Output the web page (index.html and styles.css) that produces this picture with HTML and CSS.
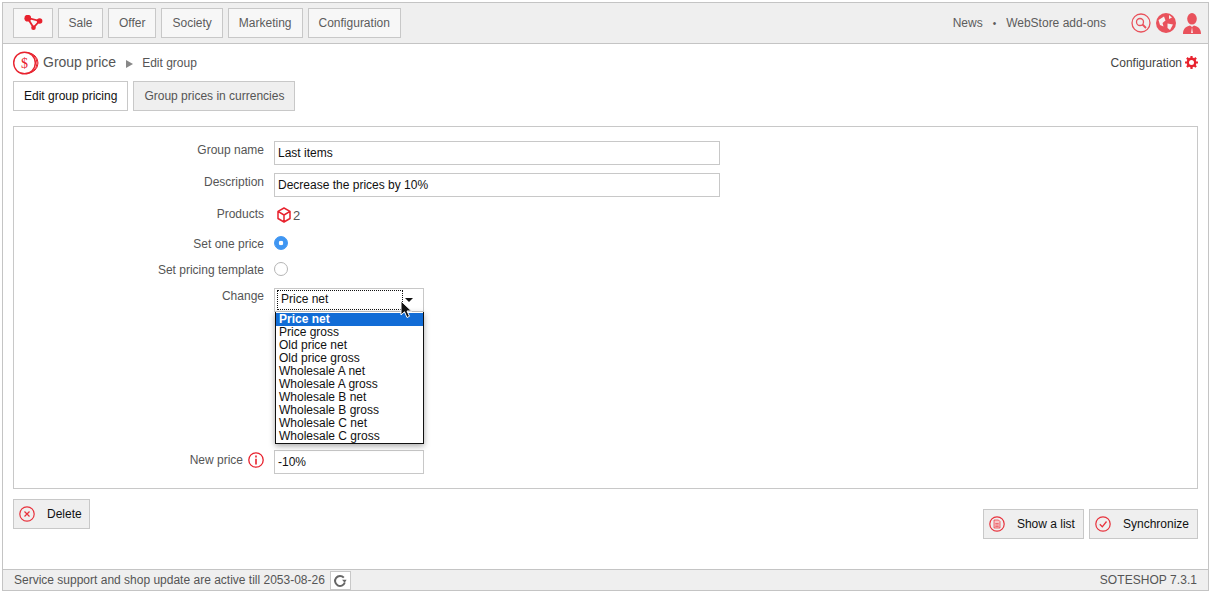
FILE: index.html
```html
<!DOCTYPE html>
<html lang="en">
<head>
<meta charset="utf-8">
<title>Group price</title>
<link rel="stylesheet" href="styles.css">
</head>
<body>
<div class="frame">
  <header class="topbar">
    <nav class="menu">
      <a class="btn logo"><svg width="20" height="16" viewBox="0 0 20 16"><path d="M3.500 3 L9.500 12.500 L15.500 6 Z" fill="none" stroke="#e8222e" stroke-width="1.800"/><circle cx="3.800" cy="3.200" r="3.400" fill="#e8222e"/><circle cx="15.600" cy="6" r="2.800" fill="#e8222e"/><circle cx="9.500" cy="12.700" r="2.300" fill="#e8222e"/></svg></a>
      <a class="btn b-sale">Sale</a>
      <a class="btn">Offer</a>
      <a class="btn">Society</a>
      <a class="btn">Marketing</a>
      <a class="btn">Configuration</a>
    </nav>
    <div class="top-right">
      <span>News</span><span class="dot">•</span><span>WebStore add-ons</span>
      <span class="top-icons">
        <svg width="20" height="20" viewBox="0 0 20 20"><circle cx="10" cy="10" r="9" fill="none" stroke="#e9525c" stroke-width="1.300"/><circle cx="9" cy="9" r="3.500" fill="none" stroke="#e9525c" stroke-width="1.300"/><path d="M11.500 11.500 L15 15" stroke="#e9525c" stroke-width="1.800"/></svg>
        <svg width="20" height="20" viewBox="0 0 20 20"><circle cx="10" cy="10" r="10" fill="#e9525c"/><path d="M2.500 7 L8 3.500 L9.500 7.500 L6.500 10 L7.500 13.500 L4 12 Z M11.500 10.500 L17 11.500 L14 17 L11.500 15 Z M13 2 L16 4.500 L13 6 Z" fill="#f6f0f0"/></svg>
        <svg class="person" width="20" height="21" viewBox="0 0 20 21"><ellipse cx="10" cy="5.800" rx="4.800" ry="5.800" fill="#e9525c"/><path d="M1 21 C1 15.500 4 13.500 8 12.500 L10 14 L12 12.500 C16 13.500 19 15.500 19 21 Z" fill="#e9525c"/><path d="M10 14 L9.200 20 L10.800 20 Z" fill="#fff"/></svg>
      </span>
    </div>
  </header>

  <main class="content">
    <div class="crumbs">
      <div class="crumb-left">
        <svg class="crumb-icon" width="26" height="24" viewBox="0 0 26 24"><circle cx="15" cy="12" r="10" fill="none" stroke="#e8222e" stroke-width="1"/><circle cx="13.500" cy="12" r="10.500" fill="none" stroke="#e8222e" stroke-width="1"/><circle cx="11.500" cy="12" r="10.800" fill="#fff" stroke="#e8222e" stroke-width="1.400"/><text x="11.500" y="17" text-anchor="middle" class="dollar">$</text></svg>
        <span class="crumb-title">Group price</span>
        <span class="crumb-arrow"></span>
        <span class="crumb-sub">Edit group</span>
      </div>
      <div class="crumb-right">Configuration
        <svg width="13" height="13" viewBox="0 0 13 13"><circle cx="6.500" cy="6.500" r="3.700" fill="none" stroke="#e8222e" stroke-width="2.400"/><path d="M6.500 0 V13 M0 6.500 H13 M1.900 1.900 L11.100 11.100 M11.100 1.900 L1.900 11.100" stroke="#e8222e" stroke-width="2.200" stroke-dasharray="2.400 8.200 2.400"/></svg>
      </div>
    </div>

    <div class="tabs">
      <a class="tab active">Edit group pricing</a>
      <a class="tab">Group prices in currencies</a>
    </div>

    <form class="panel">
      <div class="row r-name"><label>Group name</label><div class="input wide">Last items</div></div>
      <div class="row r-desc"><label>Description</label><div class="input wide">Decrease the prices by 10%</div></div>
      <div class="row r-prod"><label>Products</label>
        <div class="products"><svg width="14" height="16" viewBox="0 0 14 16"><path d="M7 1 L13 4.300 V11.500 L7 15 L1 11.500 V4.300 Z M1 4.300 L7 8 L13 4.300 M7 8 V15" fill="none" stroke="#e8222e" stroke-width="1.500" stroke-linejoin="round"/></svg><span>2</span></div>
      </div>
      <div class="row r-one"><label>Set one price</label><span class="radio on"></span></div>
      <div class="row r-tpl"><label>Set pricing template</label><span class="radio"></span></div>
      <div class="row r-change"><label>Change</label>
        <div class="select">
          <span class="select-focus">Price net</span><span class="caret"></span>
          <svg class="cursor" width="13" height="19" viewBox="0 0 13 19"><path d="M1 1 V15 L4.500 11.800 L7 17.500 L9.500 16.300 L7 11 L11.500 11 Z" fill="#111" stroke="#fff" stroke-width="1"/></svg>
          <ul class="dropdown">
            <li class="sel">Price net</li>
            <li>Price gross</li>
            <li>Old price net</li>
            <li>Old price gross</li>
            <li>Wholesale A net</li>
            <li>Wholesale A gross</li>
            <li>Wholesale B net</li>
            <li>Wholesale B gross</li>
            <li>Wholesale C net</li>
            <li>Wholesale C gross</li>
          </ul>
        </div>
      </div>
      <div class="row r-new"><label>New price <svg class="info" width="16" height="16" viewBox="0 0 16 16"><circle cx="8" cy="8" r="7.200" fill="none" stroke="#e8222e" stroke-width="1.300"/><path d="M8 3.600 V5.400 M8 6.800 V12.400" stroke="#e8222e" stroke-width="1.600"/></svg></label><div class="input narrow">-10%</div></div>
    </form>

    <div class="actions">
      <a class="act act-del"><svg width="16" height="16" viewBox="0 0 16 16"><circle cx="8" cy="8" r="7.200" fill="none" stroke="#e8323c" stroke-width="1.200"/><path d="M5.500 5.500 L10.500 10.500 M10.500 5.500 L5.500 10.500" stroke="#e8323c" stroke-width="1.200"/></svg><span>Delete</span></a>
      <div class="actions-right">
        <a class="act"><svg width="16" height="16" viewBox="0 0 16 16"><circle cx="8" cy="8" r="7.200" fill="none" stroke="#e8323c" stroke-width="1.200"/><path d="M5 4 H9.500 L11 5.500 V12 H5 Z" fill="#f7c4c6" stroke="#e8323c" stroke-width=".7"/><path d="M6.300 7.500 H9.700 M6.300 9 H9.700 M6.300 10.500 H9.700" stroke="#e8323c" stroke-width=".6"/></svg><span>Show a list</span></a>
        <a class="act"><svg width="16" height="16" viewBox="0 0 16 16"><circle cx="8" cy="8" r="7.200" fill="none" stroke="#e8323c" stroke-width="1.200"/><path d="M4.800 8.300 L7.300 10.800 L11.500 5.500" fill="none" stroke="#e8323c" stroke-width="1.300"/></svg><span>Synchronize</span></a>
      </div>
    </div>
  </main>

  <footer class="status">
    <div class="status-left"><span>Service support and shop update are active till 2053-08-26</span>
      <span class="refresh"><svg width="14" height="14" viewBox="0 0 14 14"><path d="M11.800 8.500 A5 5 0 1 1 10.800 3.600" fill="none" stroke="#666" stroke-width="2"/><path d="M9 5.800 H13.600 L11.700 8.800 Z" fill="#666"/></svg></span>
    </div>
    <span class="version">SOTESHOP 7.3.1</span>
  </footer>
</div>
</body>
</html>
```

FILE: styles.css
```css
* { box-sizing: border-box; }
html, body { margin: 0; padding: 0; background: #fff; }
body {
  font-family: "Liberation Sans", Arial, sans-serif;
  font-size: 12px;
  color: #555;
  padding: 2px 1px 2px 2px;
}
svg { display: block; flex: none; }
ul { list-style: none; margin: 0; padding: 0; }

.frame {
  height: 589px;
  border: 1px solid #c4c4c4;
  display: flex;
  flex-direction: column;
}

/* top bar */
.topbar {
  height: 41px;
  flex: none;
  background: #efefef;
  border-bottom: 1px solid #c4c4c4;
  padding: 5px 6px 0 10px;
  display: flex;
  justify-content: space-between;
}
.menu { display: flex; gap: 5px; }
.btn {
  height: 30px;
  padding: 0 10px;
  background: #f7f7f7;
  border: 1px solid #c8c8c8;
  display: flex;
  align-items: center;
  color: #5c5c5c;
}
.b-sale { width: 45px; padding: 0; justify-content: center; }
.logo { width: 40px; padding: 0 0 0 10px; }
.top-right { display: flex; align-items: center; height: 30px; color: #5c5c5c; }
.dot { margin: 0 10px; font-size: 10px; }
.top-icons { display: flex; align-items: center; gap: 5px; margin-left: 25px; }
.person { margin-left: 1px; margin-top: 0; }

/* content */
.content { flex: 1; padding: 0 10px; display: flex; flex-direction: column; }
.crumbs {
  height: 37px;
  display: flex;
  justify-content: space-between;
  align-items: center;
}
.crumb-left { display: flex; align-items: center; }
.crumb-icon { margin-right: 4px; }
.crumb-title { font-size: 14px; color: #555; margin-top: -2px; }
.crumb-arrow {
  width: 0; height: 0;
  margin: 2px 9px 0 10px;
  border-left: 7px solid #888;
  border-top: 4px solid transparent;
  border-bottom: 4px solid transparent;
}
.crumb-right { display: flex; align-items: center; gap: 3px; color: #444; padding-left: 1px; }

.tabs { display: flex; gap: 5px; }
.tab {
  height: 30px;
  padding: 0 10px;
  display: flex;
  align-items: center;
  border: 1px solid #c8c8c8;
  background: #efefef;
  color: #555;
}
.tab.active { background: #fff; color: #111; }

.panel {
  margin-top: 15px;
  height: 363px;
  border: 1px solid #c8c8c8;
}
.row { display: flex; align-items: flex-start; }
.row label {
  width: 250px;
  text-align: right;
  flex: none;
  color: #555;
}
.input {
  height: 24px;
  margin-left: 10px;
  border: 1px solid #c8c8c8;
  background: #fff;
  color: #111;
  padding: 4px 3px 0;
  line-height: 14px;
}
.wide { width: 446px; }
.narrow { width: 150px; }

.r-name { margin-top: 14px; }
.r-name label, .r-desc label { padding-top: 2px; }
.r-desc { margin-top: 8px; }
.r-prod { margin-top: 9px; height: 20px; }
.r-prod label { padding-top: 1px; }
.r-one { margin-top: 9px; height: 18px; align-items: center; }
.r-tpl { margin-top: 8px; height: 18px; align-items: center; }
.r-change { margin-top: 9px; }
.r-change label { padding-top: 1px; }
.r-new { margin-top: 138px; }
.r-new label { display: flex; justify-content: flex-end; align-items: center; gap: 5px; height: 20px; }

.products { margin-left: 13px; margin-top: 1px; display: flex; align-items: flex-end; gap: 2px; color: #555; font-size: 13px; }
.radio {
  margin-left: 10px;
  margin-top: -2px;
  width: 14px; height: 14px;
  border-radius: 50%;
  border: 1px solid #b5b5b5;
  background: #fff;
}
.radio.on {
  background: radial-gradient(circle, #fff 0, #fff 2px, #3f96f2 2.600px);
  border-color: #3f96f2;
}

.select {
  position: relative;
  margin-left: 10px;
  width: 150px;
  height: 24px;
  border: 1px solid #c8c8c8;
  padding: 1px;
  display: flex;
  align-items: center;
  color: #111;
}
.select-focus {
  width: 126px;
  height: 20px;
  margin-left: 1px;
  border: 1px dotted #111;
  padding: 0 3px;
  line-height: 16px;
}
.caret {
  width: 0; height: 0;
  margin-left: 2px;
  border-top: 4px solid #111;
  border-left: 4.500px solid transparent;
  border-right: 4.500px solid transparent;
}
.cursor { position: absolute; left: 125px; top: 11px; z-index: 3; }
.dropdown {
  position: absolute;
  left: 0;
  top: 23px;
  width: 149px;
  height: 132px;
  z-index: 2;
  background: #fff;
  border: 1px solid #111;
  border-top: 0;
  box-shadow: 0 2px 6px rgba(0,0,0,.35);
  color: #111;
}
.dropdown li { height: 13px; line-height: 13px; padding-left: 3px; position: relative; top: 1px; }
.dropdown li.sel { background: #116cd6; color: #fff; font-weight: bold; }

/* actions */
.actions {
  margin-top: 10px;
  display: flex;
  justify-content: space-between;
  align-items: flex-start;
}
.actions-right { display: flex; gap: 5px; margin-top: 10px; }
.act {
  height: 30px;
  display: flex;
  align-items: center;
  padding: 0 8px 0 5px;
  gap: 12px;
  background: #efefef;
  border: 1px solid #c8c8c8;
  color: #111;
}
.act-del { padding-right: 7px; }

/* status */
.status {
  flex: none;
  height: 21px;
  background: #efefef;
  border-top: 1px solid #c4c4c4;
  padding: 0 11px;
  display: flex;
  justify-content: space-between;
  align-items: center;
  color: #555;
}
.status-left { display: flex; align-items: center; gap: 5px; }
.version { letter-spacing: .05px; }
.refresh {
  width: 21px; height: 19px;
  background: #fff;
  border: 1px solid #c8c8c8;
  display: flex;
  align-items: center;
  justify-content: center;
  margin-top: 1px;
}
.dollar { font: 14px "Liberation Serif", serif; fill: #e8222e; }
```
